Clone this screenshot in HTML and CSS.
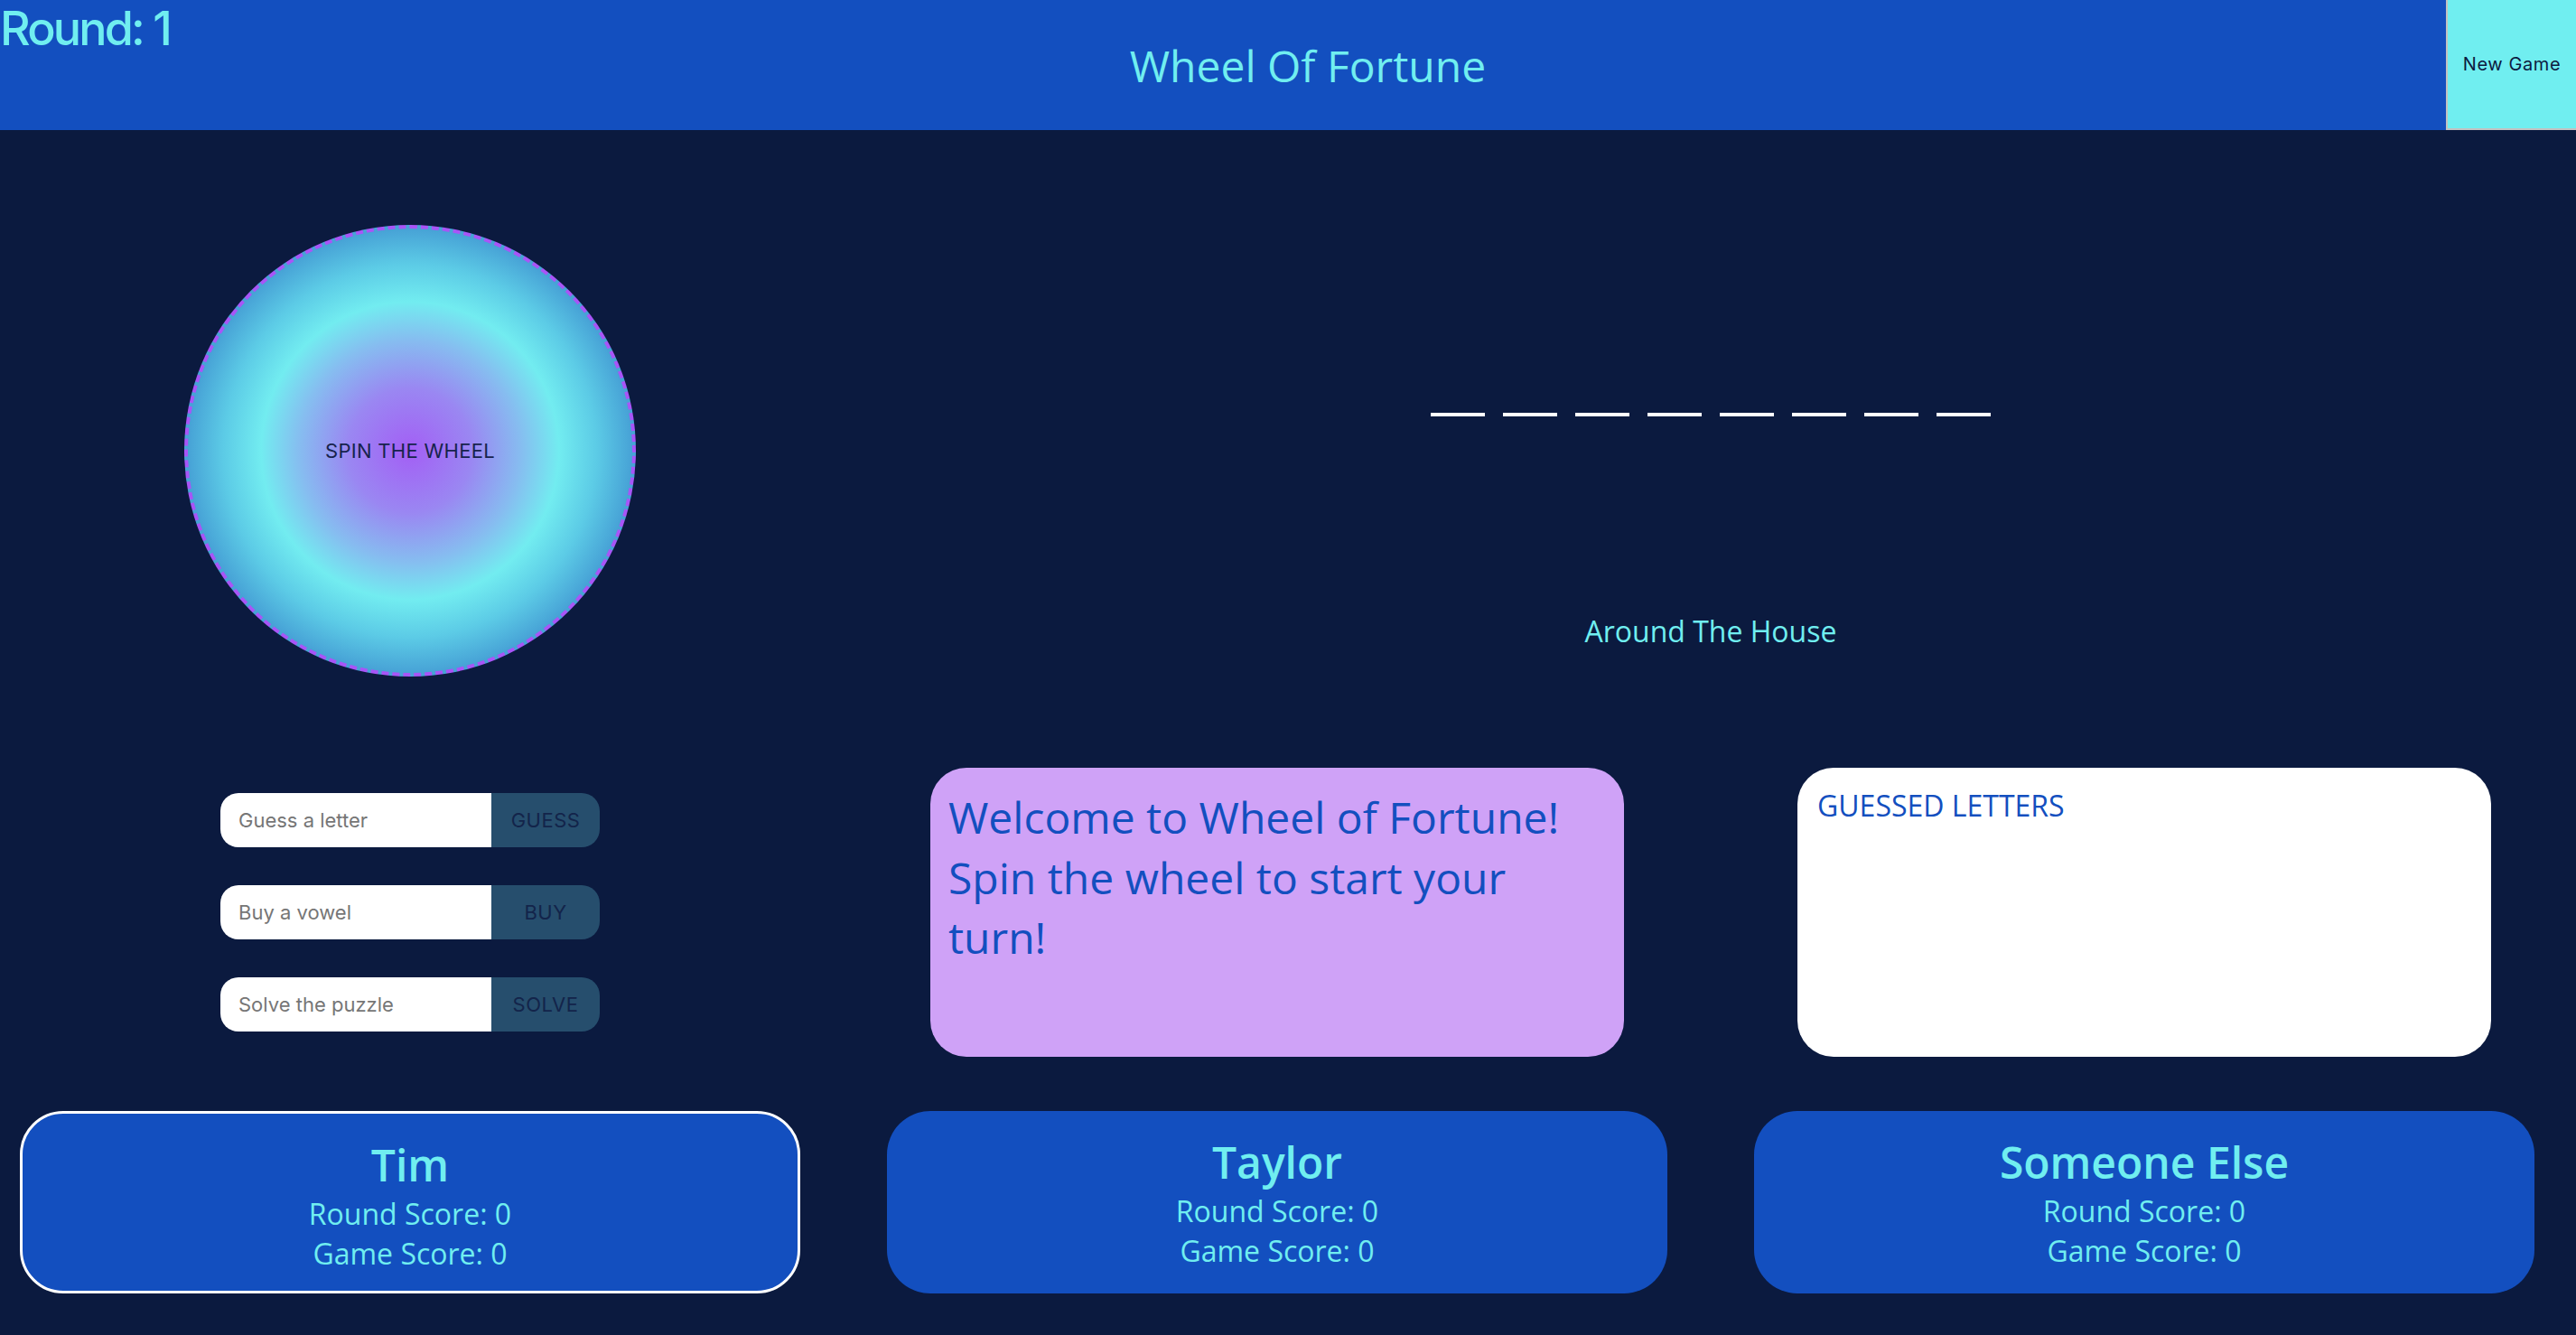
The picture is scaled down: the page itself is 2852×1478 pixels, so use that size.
FILE: index.html
```html
<!DOCTYPE html>
<html lang="en">
<head>
<meta charset="utf-8">
<title>Wheel Of Fortune</title>
<link rel="stylesheet" href="styles.css">
</head>
<body>
<header class="topbar">
  <div class="round">Round: 1</div>
  <h1 class="title">Wheel Of Fortune</h1>
  <button class="new-game">New Game</button>
</header>
<main class="board">
  <section class="wheel-col">
    <div class="wheel">SPIN THE WHEEL</div>
  </section>
  <section class="puzzle">
    <div class="tiles">
      <span class="tile"></span><span class="tile"></span><span class="tile"></span><span class="tile"></span>
      <span class="tile"></span><span class="tile"></span><span class="tile"></span><span class="tile"></span>
    </div>
    <div class="category">Around The House</div>
  </section>
  <section class="actions">
    <form class="action-row"><input class="action-input" type="text" placeholder="Guess a letter"><button class="action-btn" type="button">GUESS</button></form>
    <form class="action-row"><input class="action-input" type="text" placeholder="Buy a vowel"><button class="action-btn" type="button">BUY</button></form>
    <form class="action-row"><input class="action-input" type="text" placeholder="Solve the puzzle"><button class="action-btn" type="button">SOLVE</button></form>
  </section>
  <section class="message">Welcome to Wheel of Fortune! Spin the wheel to start your turn!</section>
  <section class="guessed">
    <h2 class="guessed-title">GUESSED LETTERS</h2>
  </section>
  <div class="card active">
    <div class="name">Tim</div>
    <div class="score">Round Score: 0</div>
    <div class="score">Game Score: 0</div>
  </div>
  <div class="card">
    <div class="name">Taylor</div>
    <div class="score">Round Score: 0</div>
    <div class="score">Game Score: 0</div>
  </div>
  <div class="card">
    <div class="name">Someone Else</div>
    <div class="score">Round Score: 0</div>
    <div class="score">Game Score: 0</div>
  </div>
</main>
</body>
</html>
```
FILE: styles.css
```css
html, body {
  margin: 0;
  padding: 0;
}
body {
  background: #0b1a3f;
  font-family: "Open Sans", "Noto Sans", sans-serif;
  color: #70eef0;
  overflow: hidden;
}

.topbar {
  display: flex;
  justify-content: space-between;
  align-items: center;
  height: 144px;
  background: #134fbf;
}
.round {
  align-self: flex-start;
  font-family: Inter, "Liberation Sans", sans-serif;
  font-size: 52px;
  font-weight: 500;
  letter-spacing: -2.8px;
  line-height: normal;
}
.title {
  margin: 0;
  font-size: 48px;
  font-weight: 400;
  line-height: normal;
}
.new-game {
  align-self: stretch;
  width: 144px;
  padding: 0;
  background: #70eef0;
  border: 0;
  border-left: 2px solid #c2c2c2;
  border-bottom: 2px solid #c2c2c2;
  font-family: Inter, "Liberation Sans", sans-serif;
  font-size: 20px;
  letter-spacing: 0.6px;
  color: #0c1a3f;
}

.board {
  display: grid;
  grid-template-columns: repeat(3, 908px);
  column-gap: 52px;
  padding: 105px 24px 0 0;
  align-items: start;
}

.wheel-col {
  display: flex;
  justify-content: center;
}
.wheel {
  width: 500px;
  height: 500px;
  box-sizing: border-box;
  border-radius: 50%;
  border: 4px dashed #a855f7;
  background: radial-gradient(circle closest-side, #a35ff5 0%, #9a87f2 28%, #86bdf0 50%, #72ecf0 67%, #5ccbe6 84%, #47a2d6 100%);
  display: flex;
  align-items: center;
  justify-content: center;
  font-family: Inter, "Liberation Sans", sans-serif;
  font-size: 22px;
  letter-spacing: 0.3px;
  color: #17234d;
}

.puzzle {
  grid-column: 2 / 4;
  display: flex;
  flex-direction: column;
  align-items: center;
}
.tiles {
  display: flex;
  gap: 20px;
  margin-top: 152px;
}
.tile {
  width: 60px;
  height: 56px;
  border-bottom: 4px solid #ffffff;
}
.category {
  margin-top: 216px;
  font-size: 32px;
  line-height: normal;
}

.actions {
  justify-self: center;
  margin-top: 129px;
  display: flex;
  flex-direction: column;
  gap: 42px;
}
.action-row {
  display: flex;
  width: 420px;
  height: 60px;
  margin: 0;
}
.action-input {
  width: 300px;
  box-sizing: border-box;
  border: 0;
  border-radius: 20px 0 0 20px;
  padding: 0 20px;
  background: #ffffff;
  font-family: Inter, "Liberation Sans", sans-serif;
  font-size: 22px;
  outline: none;
}
.action-input::placeholder {
  color: #767676;
}
.action-btn {
  width: 120px;
  border: 0;
  border-radius: 0 20px 20px 0;
  background: #264e6d;
  color: #13244a;
  font-family: Inter, "Liberation Sans", sans-serif;
  font-size: 22px;
  letter-spacing: 0.5px;
  padding: 0;
}

.message {
  justify-self: center;
  margin-top: 101px;
  width: 768px;
  height: 320px;
  box-sizing: border-box;
  padding: 22px 30px 20px 20px;
  border-radius: 40px;
  background: #cfa2f7;
  color: #134fbf;
  font-size: 48px;
  line-height: 66.5px;
}
.guessed {
  justify-self: center;
  margin-top: 101px;
  width: 768px;
  height: 320px;
  box-sizing: border-box;
  padding: 20px 20px 20px 22px;
  border-radius: 40px;
  background: #ffffff;
}
.guessed-title {
  margin: 0;
  font-size: 32px;
  font-weight: 400;
  line-height: normal;
  color: #134fbf;
}

.card {
  justify-self: center;
  margin-top: 60px;
  width: 864px;
  height: 202px;
  box-sizing: border-box;
  padding-top: 25px;
  border-radius: 48px;
  background: #134fbf;
  text-align: center;
}
.card.active {
  border: 3px solid #ffffff;
}
.name {
  font-size: 48px;
  font-weight: 600;
  line-height: 64px;
}
.score {
  font-size: 32px;
  line-height: 44px;
}
```
